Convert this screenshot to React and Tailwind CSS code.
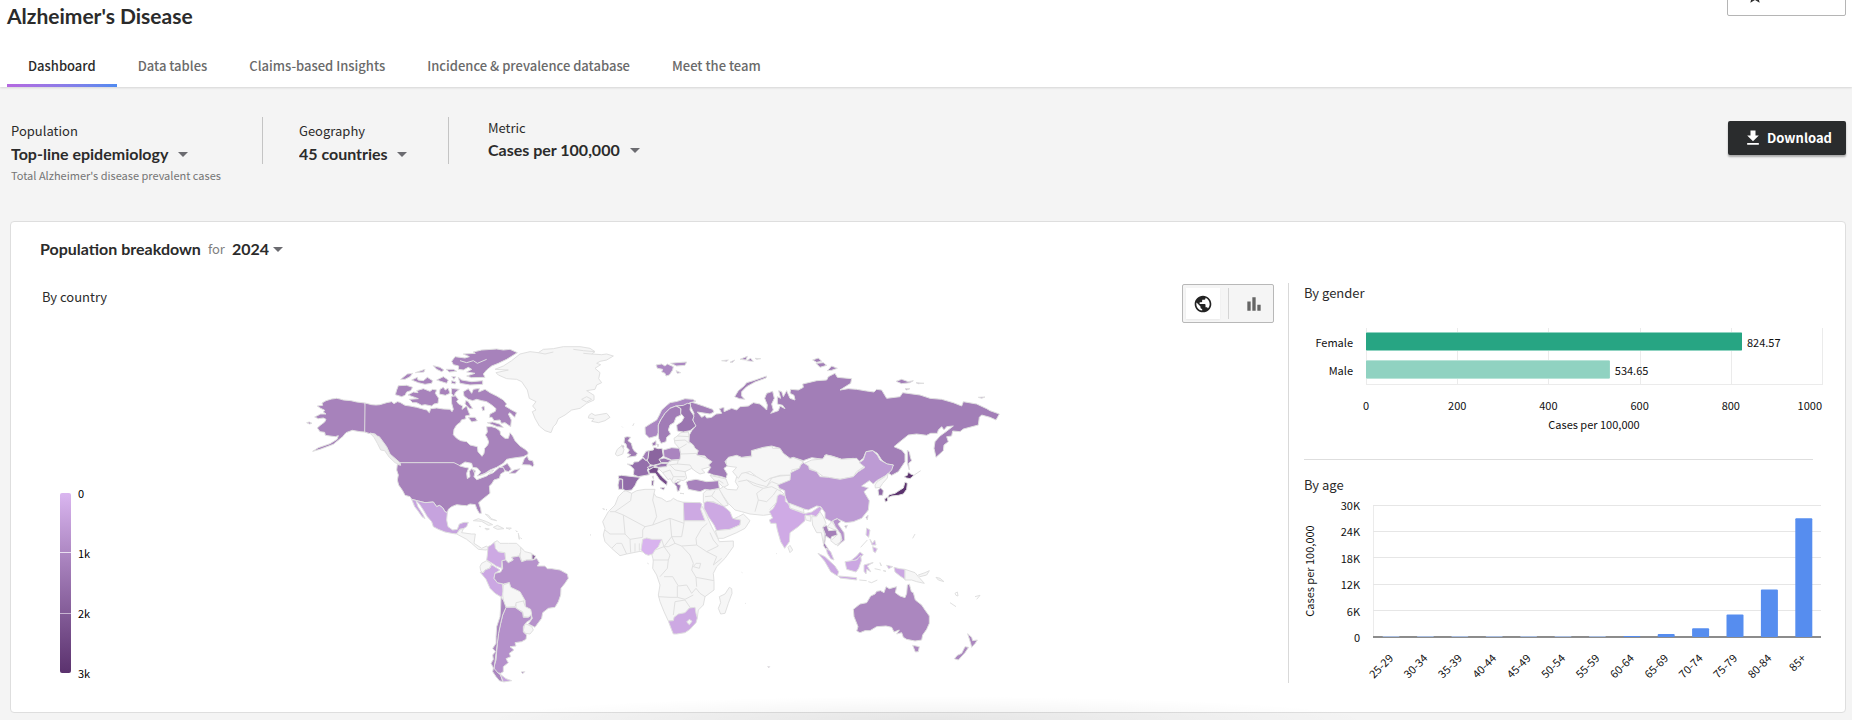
import React, { useState } from 'react';
import { MdArrowDropDown, MdBarChart, MdGetApp, MdPublic, MdStarBorder } from 'react-icons/md';

const tabs = [
  'Dashboard',
  'Data tables',
  'Claims-based Insights',
  'Incidence & prevalence database',
  'Meet the team',
];

const genderData = [
  { label: 'Female', value: 824.57, color: '#27a583', edge: '#8fd3c1' },
  { label: 'Male', value: 534.65, color: '#90d2c1', edge: '#b9e3d8' },
];

const ageData = [
  { label: '25-29', value: 30 },
  { label: '30-34', value: 30 },
  { label: '35-39', value: 30 },
  { label: '40-44', value: 30 },
  { label: '45-49', value: 30 },
  { label: '50-54', value: 40 },
  { label: '55-59', value: 60 },
  { label: '60-64', value: 250 },
  { label: '65-69', value: 700 },
  { label: '70-74', value: 2000 },
  { label: '75-79', value: 5100 },
  { label: '80-84', value: 10800 },
  { label: '85+', value: 27000 },
];

const NONE = '#f6f6f6';

// Each region has its own origin on the 2190 x 1059 map canvas
const regions = [
  {
    name: 'north-america',
    x: 0,
    y: 0,
    shapes: [
      // Alaska and the Aleutians
      ['#a782bb', 'M225,219L200,216 183,212 160,210 150,207 140,205 125,207 108,212 96,219 98,226 82,228 90,234 104,241 100,246 108,252 92,252 74,261 85,266 100,264 108,268 104,276 88,288 82,294 90,305 104,307 106,316 120,318 136,320 145,317 141,328 120,341 85,353 68,364 90,358 130,343 158,320 168,308 187,301 210,305 224,306 240,311Z'],
      ['#a782bb', 'M50,278L58,276 66,280 58,282Z'],
      // Canada
      ['#a782bb', 'M225,219L245,224 258,225 270,224 290,218 305,215 312,221 322,215 330,217 345,226 360,228 380,232 395,236 410,240 418,248 422,236 440,234 460,237 480,238 486,245 490,238 485,220 484,200 495,196 505,208 500,214 506,222 518,228 516,238 530,228 535,244 540,255 526,258 528,266 514,270 512,276 500,285 492,298 490,314 500,325 512,332 530,335 540,345 562,350 564,365 576,379 582,370 584,355 593,345 596,336 592,325 586,315 592,306 590,290 605,290 618,294 630,303 632,314 645,325 655,325 660,308 668,318 675,332 690,348 705,358 714,366 714,373 700,380 665,385 650,388 640,400 620,412 600,420 585,430 570,436 562,448 330,402 318,393 300,378 292,362 282,348 266,325 256,312 240,311 224,306Z'],
      ['#ededed', 'M240,309L252,312 262,318 268,320 290,350 300,372 330,398 332,405 315,398 298,382 284,362 272,360 262,340 252,322Z'],
      ['#a782bb', 'M325,167L350,166 368,172 362,182 350,186 345,196 335,200 316,194 320,180Z'],
      ['#a782bb', 'M354,195L370,186 384,188 380,182 400,176 420,184 428,178 440,180 436,190 446,205 444,220 432,222 425,228 405,224 395,226 380,218 368,218 358,208 385,206Z'],
      ['#a782bb', 'M332,148L352,132 368,130 360,140 345,148ZM365,150L382,142 384,150 400,152 412,142 428,152 425,160 405,163 385,158ZM376,128L405,118 402,126ZM430,107L450,112 462,120 455,125 440,118ZM440,150L460,140 475,150 470,160ZM468,118L490,118 500,124 478,126ZM485,140L497,140 492,148ZM485,152L498,156 496,162 484,160Z'],
      ['#a782bb', 'M682,68L660,58 640,60 620,57 575,60 550,66 556,70 520,72 538,80 525,84 495,80 485,94 490,104 506,108 505,118 520,120 535,112 545,118 530,126 555,130 530,138 545,143 585,142 580,132 590,120 605,108 625,100 650,88Z'],
      ['none', 'M510,92L530,98 550,92 562,100 590,88'],
      ['#a782bb', 'M505,142L515,150 545,155 578,152 578,163 540,165 510,160Z'],
      ['#a782bb', 'M450,178L460,172 466,180 474,174 480,190 466,196 448,192ZM485,175L508,178 496,188 492,200 484,190Z'],
      ['#a782bb', 'M520,185L535,176 545,190 550,178 568,175 566,186 585,178 600,188 620,198 640,210 650,222 645,228 665,240 680,248 674,262 660,248 655,252 664,270 662,290 645,278 634,280 630,270 612,272 606,262 598,262 600,252 616,244 618,236 605,225 590,215 575,212 560,208 548,212 535,208 522,198Z'],
      ['#a782bb', 'M535,262L555,262 562,272 545,276ZM527,212L534,214 548,236 540,236 525,222ZM575,232L582,228 584,240 578,242ZM592,278L608,276 628,282 640,292 622,290Z'],
      ['#a782bb', 'M703,386L712,378 716,390 728,392 732,405 728,410 720,405 696,404ZM658,430L672,420 690,416 676,430ZM645,422L635,410 652,400 664,418 655,425Z'],
      // United States
      ['#a782bb', 'M322,403L332,406 330,398 492,398 512,408 540,400 562,448 585,438 610,428 628,412 640,412 645,424 632,432 628,445 612,450 605,462 598,468 600,490 590,498 575,510 566,518 572,536 574,550 568,550 560,536 556,524 540,522 530,527 515,526 500,524 485,530 475,538 472,548 465,545 458,533 448,526 440,530 430,516 405,518 385,513 365,508 360,500 345,496 338,482 326,465 322,450 325,435 320,420Z'],
      ['#ffffff', 'M508,407L525,396 545,400 548,412 562,414 572,426 562,438 580,434 600,424 612,420 590,438 560,449 552,440 556,422 545,416 538,424 540,440 532,446 530,430 536,414 524,412Z'],
      // Mexico and Central America
      ['#c6a3de', 'M365,508L385,513 405,518 430,516 440,530 448,526 458,533 465,545 472,548 470,570 474,590 488,600 502,598 508,582 522,577 535,577 530,590 520,596 510,598 505,604 500,612 485,610 465,606 445,598 430,590 425,575 412,560 400,540 388,522 378,512 384,530 398,552 405,566 396,560 382,540 374,530Z'],
      [NONE, 'M500,612L510,598 520,596 515,608 545,612 556,612 552,640 575,655 590,648 597,656 588,660 565,658 545,640 530,628Z'],
      // Greenland and Iceland
      [NONE, 'M615,118L640,108 665,92 690,72 720,65 745,68 760,58 790,56 820,50 870,50 900,55 915,65 905,72 935,74 950,72 970,78 950,90 930,94 920,100 932,104 915,115 930,128 926,146 935,158 920,165 915,178 890,182 912,196 912,210 890,220 870,235 845,240 825,255 805,266 798,282 790,290 783,308 765,302 748,288 735,265 727,245 738,240 728,228 738,215 718,205 712,180 695,155 680,148 650,146 625,135 618,128 655,120Z'],
      [NONE, 'M875,208L890,200 905,208 890,216ZM897,256L905,250 915,256 950,250 960,262 945,272 925,278 905,274 912,266 895,264Z'],
      ['none', 'M745,68L765,72 790,66M850,58L880,62 915,65M880,70L905,72'],
    ],
  },
  {
    name: 'south-america',
    x: 510,
    y: 510,
    shapes: [
      [NONE, 'M40,62L55,56 80,65 98,74 85,76 65,64ZM100,82L112,76 132,86 112,88ZM138,84L154,84 150,88ZM58,79L62,80ZM75,85L88,87 80,90ZM76,42L86,46 94,56 110,62 92,58ZM168,92L172,96ZM175,100L178,118ZM182,114L185,116Z'],
      ['#cda9e3', 'M104,126L92,136 84,140 82,165 80,180 100,192 108,198 125,205 126,182 137,180 135,158 115,155 108,145Z'],
      [NONE, 'M104,126L112,122 120,130 145,130 170,130 182,142 190,150 180,160 178,168 155,172 160,180 145,188 137,180 135,158 115,155 106,145Z'],
      [NONE, 'M182,142L195,155 215,160 216,178 200,180 185,185 180,168 182,155Z'],
      ['#8b659f', 'M216,162L227,168 222,178 216,178Z'],
      [NONE, 'M65,190L80,182 95,192 88,205 75,210 68,218 62,212 60,200Z'],
      ['#cba7e2', 'M60,216L70,218 75,210 90,204 95,194 112,205 120,210 105,220 102,235 112,248 127,252 130,275 125,292 105,280 90,265 78,238Z'],
      ['#b692cb', 'M126,182L137,180 145,188 160,180 155,172 178,168 185,185 200,180 218,180 230,175 238,188 232,198 255,198 262,206 275,206 300,210 322,222 325,235 315,250 303,265 302,285 295,305 285,322 265,325 248,338 245,355 235,368 225,382 205,372 217,355 213,342 196,320 195,300 180,290 165,270 150,262 148,248 130,252 112,248 102,235 105,220 122,216 128,205Z'],
      [NONE, 'M130,255L148,248 152,262 180,275 193,298 190,308 170,308 165,320 140,322 132,312 128,285Z'],
      [NONE, 'M168,308L190,303 196,320 212,328 215,342 205,352 190,350 188,335 168,325Z'],
      [NONE, 'M195,370L215,380 220,390 210,402 196,400 190,392Z'],
      ['#b490ca', 'M138,322L165,322 188,338 190,352 205,352 215,345 213,358 198,368 190,380 190,396 200,405 198,418 185,425 165,428 168,438 150,440 162,450 148,460 152,470 138,476 145,488 130,500 130,515 122,520 105,518 102,500 108,480 110,455 112,430 115,400 122,370 128,345Z'],
      ['#aa86bf', 'M123,292L130,300 138,322 128,345 122,370 116,400 112,430 108,460 105,485 102,505 115,520 122,524 128,545 118,542 108,530 98,515 100,504 93,490 100,478 98,465 106,455 98,445 108,430 108,410 110,380 120,350 122,320Z'],
      ['#c6a3de', 'M120,522L138,536 155,542 130,546Z'],
      ['#a782bb', 'M183,516L194,515 188,521Z'],
      ['#a782bb', 'M428,26L434,28ZM438,30L441,28Z'],
      [NONE, 'M390,104L392,105ZM563,190L565,191Z'],
    ],
  },
  {
    name: 'africa',
    x: 900,
    y: 0,
    shapes: [
      [NONE, 'M100,485L108,482 125,490 140,482 165,478 195,478 192,490 198,500 215,505 230,515 242,512 250,505 262,512 280,517 330,518 345,545 365,590 382,622 388,635 430,633 430,650 405,685 380,710 370,730 372,755 372,780 345,800 340,825 325,840 322,862 235,873 222,845 210,815 205,795 210,765 200,735 188,715 190,690 185,672 150,664 110,672 90,677 65,655 45,635 40,615 45,595 38,575 55,545 75,525 85,500Z'],
      ['none', 'M125,490L122,512 75,545 100,555 105,612 60,612 45,600M75,545L60,545M100,555L165,590 158,600 158,622 120,628 105,612M165,590L188,585 240,565 282,580 282,517M192,490L188,510 195,535 200,560 188,585M240,565L245,620 222,650 215,628M282,572L345,572M245,620L275,620 282,580M245,620L255,640 235,650 222,650M255,640L275,648 320,645 350,665 385,648 370,630 360,608M320,645L318,625 335,595 352,580M350,665L380,680 370,705 395,685M275,648L300,675 310,700 305,720 318,742 372,752M188,690L235,690 240,675 222,650M235,690L232,715 210,740M222,740L248,740 265,768 290,765 305,790 318,775 330,790 345,800M205,800L240,802 262,802 285,808 310,795M262,768L262,802M255,815L250,855M255,815L285,810 300,832M65,655L80,640 95,640 110,672M120,628L122,668M135,640L135,665M148,640L148,662M318,700L332,700 328,715 310,710ZM222,650L195,660M318,742L320,770'],
      ['#cda9e3', 'M280,517L330,518 336,522 332,538 345,572 282,572Z'],
      ['#d8b3ee', 'M158,628L170,624 185,628 215,628 205,650 195,660 188,672 175,676 165,672 153,660Z'],
      ['#cda9e3', 'M235,873L250,872 252,862 265,852 285,848 298,834 315,832 318,850 322,864 318,878 300,898 285,908 260,912 250,912 245,900Z'],
      ['#f6f6f6', 'M290,876L298,868 306,874 298,884Z'],
      [NONE, 'M388,800L405,792 418,772 425,776 426,790 415,820 405,850 392,852 385,835 392,818Z'],
    ],
  },
  {
    name: 'eurasia',
    x: 900,
    y: 0,
    shapes: [
      // Eastern Europe, the Balkans and the Caucasus
      [NONE, 'M262,318L272,308 295,306 300,335 325,362 322,375 350,385 365,392 362,410 335,418 345,428 330,432 318,425 305,415 285,425 290,445 280,452 262,448 250,460 240,445 235,450 218,428 205,415 232,402 240,392 268,390 272,370 268,355 255,340 252,325Z'],
      ['none', 'M262,318L298,320M255,332L285,330 298,340M268,355L290,342M272,372L325,370M265,390L262,402 235,405M262,402L300,405 308,418M255,420L285,425M255,420L240,405M250,440L285,440M240,420L250,440 245,452M218,428L240,420'],
      [NONE, 'M360,436L408,447 415,465 400,472 388,460 372,450Z'],
      [NONE, 'M340,490L350,480 388,476 395,490 400,500 415,525 400,530 370,515 340,518Z'],
      ['none', 'M345,500L365,498 375,482M365,498L380,510 400,528M385,450L400,460'],
      [NONE, 'M440,440L460,425 500,440 540,445 570,438 608,435 600,452 565,465 572,482 582,492 565,500 562,515 540,538 548,552 520,556 480,552 455,545 435,540 415,520 400,498 388,478 400,470 412,478 440,480 445,470 436,455Z'],
      ['none', 'M445,455L470,450 490,465 520,475 500,490 505,510 495,545M520,475L545,470 575,485M505,510L530,515 550,495 560,480M470,450L500,462 530,470 545,455 570,465M530,470L545,445'],
      [NONE, 'M408,390L415,380 440,375 455,382 485,380 484,362 520,352 545,346 548,355 570,355 580,370 600,385 610,382 640,395 632,405 628,415 605,420 608,435 570,436 540,445 525,455 500,440 480,425 455,430 445,445 428,425 440,412 410,408Z'],
      // Arabia
      ['#cda9e3', 'M342,518L352,514 370,517 400,528 420,545 428,565 452,570 450,585 420,598 380,602 372,585 355,560 342,535Z'],
      [NONE, 'M376,602L420,598 450,585 452,570 432,566 445,560 460,552 480,572 465,595 440,608 400,625 384,625Z'],
      // Russia
      ['#a27eb7', 'M300,215L316,220 340,228 368,238 372,246 360,252 322,246 335,262 345,256 350,264 365,262 378,252 395,250 388,236 402,232 402,245 425,235 440,240 450,230 475,228 490,218 510,222 520,230 530,240 532,225 524,205 530,190 548,184 553,205 545,222 550,240 542,250 565,242 570,228 585,236 578,226 562,222 562,200 572,205 566,182 575,185 580,200 590,182 600,205 615,210 612,196 600,190 602,178 625,180 640,172 638,162 655,158 680,152 710,150 715,140 735,130 742,142 785,146 782,160 750,180 775,176 800,178 830,183 852,186 860,178 875,180 890,205 930,200 938,188 990,195 1020,205 1055,208 1090,218 1115,228 1120,215 1160,222 1190,236 1200,242 1228,252 1218,270 1200,262 1175,255 1168,262 1165,285 1120,297 1110,305 1088,303 1085,318 1070,320 1075,335 1062,345 1060,362 1038,382 1032,355 1035,335 1050,318 1068,305 1090,288 1070,290 1062,300 1055,290 1045,300 1042,310 1022,310 1010,316 980,312 955,315 930,335 912,350 935,360 945,372 945,395 925,425 905,436 896,430 910,405 890,402 875,390 862,370 848,362 828,365 820,385 808,394 790,385 755,388 725,378 705,375 700,388 665,383 640,392 610,382 600,385 580,370 570,355 545,348 520,352 484,362 485,378 455,382 440,376 415,382 405,395 412,408 402,415 412,432 408,445 395,440 370,435 352,428 362,412 356,405 366,395 350,385 345,378 320,375 325,362 315,355 310,345 297,335 298,315 305,302 316,290 308,270 312,250 302,230Z'],
      ['#a27eb7', 'M434,200L445,182 462,168 470,158 490,152 530,138 528,144 495,156 470,170 455,185 455,198 464,208 448,206Z'],
      ['#a27eb7', 'M668,90L685,84 695,94 680,97ZM678,100L700,98 710,106 690,112ZM712,122L725,108 742,115 725,121ZM918,154L935,148 955,155 970,152 960,158 935,161ZM978,158L1002,160 985,161ZM945,176L960,176 950,180ZM1165,202L1185,201 1175,205ZM395,92L415,90 410,94ZM420,97L434,90 428,97ZM450,88L472,79 468,90ZM470,92L482,85 490,94ZM495,85L512,86 500,88ZM952,360L958,366 962,385 965,392 956,400 958,420 952,400Z'],
      // Nordics
      ['#ab87c2', 'M198,105L215,102 225,108 232,102 250,110 248,120 238,135 228,138 225,130 215,126 218,118 202,115ZM242,100L260,98 290,96 285,106 260,108ZM258,122L272,128 262,130Z'],
      ['#ab87c2', 'M165,292L180,282 200,270 208,255 215,240 228,228 240,218 262,214 285,206 308,208 318,214 300,218 290,225 270,228 258,228 240,235 225,250 212,270 205,285 205,308 200,318 178,324 166,312Z'],
      ['#a17cb6', 'M205,285L212,270 225,250 240,235 258,228 272,235 273,255 258,262 252,278 240,285 235,300 242,312 230,322 228,335 213,340 206,325 205,310Z'],
      ['#9a75b0', 'M260,228L280,226 292,220 302,222 300,240 312,258 308,270 318,288 300,302 280,306 262,303 260,285 275,275 282,262 272,250 273,236Z'],
      // Western and Central Europe
      ['#9d79b2', 'M104,322L112,320 122,322 114,332 124,340 128,355 132,362 142,370 138,378 112,382 122,374 112,370 118,360 110,352 108,342 102,338ZM94,345L102,348 100,355Z'],
      [NONE, 'M82,358L94,348 102,358 98,372 82,378 76,372Z'],
      ['#946fab', 'M112,402L128,404 132,396 145,395 158,384 170,392 184,398 178,410 172,420 178,434 162,437 145,440 130,434 132,418 122,408Z'],
      ['#916ca8', 'M85,438L95,436 130,440 150,442 140,455 136,465 125,480 108,482 98,478 98,448 86,446Z'],
      ['#9a75b0', 'M88,447L97,448 98,478 86,478 84,465Z'],
      ['#8b659f', 'M176,362L190,360 192,352 205,356 216,355 220,378 208,388 214,400 190,406 180,404 172,392Z'],
      ['#a17cb6', 'M158,380L168,364 177,362 174,385 168,392ZM186,340L198,332 198,345 188,348ZM200,342L206,344 204,350Z'],
      ['#aa85bf', 'M220,360L245,353 268,355 272,372 270,388 245,390 222,380Z'],
      ['#9a75b0', 'M207,388L222,384 245,392 232,398 214,398ZM192,408L215,400 232,400 230,410 205,412ZM172,412L190,406 195,413 178,418Z'],
      ['#754c8a', 'M176,420L190,412 206,414 203,425 216,440 232,455 230,466 222,460 208,448 196,430 178,430Z'],
      ['#8b659f', 'M210,474L224,472 221,480ZM185,452L192,450 190,468 185,466ZM187,440L190,438 190,446Z'],
      ['#9a75b0', 'M252,460L272,452 262,462 272,466 268,482 262,484 260,470ZM270,490L282,491Z'],
      ['#a782bc', 'M288,456L296,452 318,448 350,455 385,452 388,475 360,480 345,478 330,485 295,478Z'],
      // Asia
      [NONE, 'M643,400L665,390 698,387 708,374 730,380 755,388 800,385 808,394 820,398 822,410 800,425 790,440 750,448 700,440 680,425 658,415Z'],
      ['#bd9bd4', 'M563,465L600,450 602,428 628,415 632,405 640,398 656,408 658,418 680,425 690,440 715,442 750,448 790,440 805,425 825,412 808,398 820,390 828,365 848,362 862,375 870,390 892,402 910,405 905,420 890,435 860,452 850,462 838,452 815,468 835,474 822,485 838,512 835,540 815,565 790,575 768,578 755,572 740,566 725,575 705,565 705,548 692,530 680,528 655,540 620,532 595,520 585,500 584,482 568,475Z'],
      [NONE, 'M855,465L862,455 885,440 894,430 892,444 878,460 870,472 856,474Z'],
      ['#8f6aa6', 'M864,480L872,474 880,482 878,496 866,496Z'],
      ['#5b326e', 'M942,440L952,436 955,426 962,432 972,436 960,446 950,444ZM945,456L952,460 950,478 940,492 925,496 905,498 892,504 898,494 915,490 930,480 940,474ZM884,506L893,502 893,512 886,516Z'],
      ['none', 'M970,437L992,422'],
      ['#cfaae5', 'M562,498L570,492 586,498 586,514 596,522 600,535 640,550 648,550 665,546 688,530 696,534 688,548 678,560 665,555 645,558 645,572 625,590 600,608 598,635 584,655 572,635 562,600 558,580 542,580 538,570 548,564 538,545 550,535 560,515Z'],
      [NONE, 'M598,520L640,536 642,548 600,534ZM645,555L662,558 662,574 648,570ZM665,560L680,560 690,545 700,560 708,580 698,592 704,612 700,640 694,608 680,608 668,585ZM594,652L600,646 608,660 600,668Z'],
      [NONE, 'M712,590L725,575 738,592 755,612 752,636 738,645 722,632 738,618 740,602Z'],
      ['#a480b8', 'M698,592L710,586 716,602 738,600 742,615 725,620 722,628 708,618 704,640 718,662 706,656 700,646 706,612Z'],
      ['#b692cb', 'M728,572L742,566 752,575 744,582 762,608 764,630 742,648 756,630 752,612 736,590Z'],
      ['#c6a3de', 'M708,654L722,665 732,690 722,686 712,670ZM785,690L800,678 810,666 820,674 808,684 790,694Z'],
      ['#cba7e2', 'M684,670L705,680 735,708 746,725 742,738 722,725 704,694ZM745,738L770,740 800,743 800,750 750,744ZM765,695L785,692 800,690 812,676 814,692 806,715 798,726 770,718ZM822,705L848,698 832,708 842,725 830,718 828,732 822,724ZM870,698L874,708ZM890,706L908,710 896,716ZM912,712L928,716 945,718 945,748 930,738 915,726ZM880,722L888,724Z'],
      ['none', 'M808,750L830,752M835,755L845,758 862,750M854,716L872,720M845,700L850,698'],
      [NONE, 'M945,718L975,728 985,740 1003,760 980,755 965,750 945,750ZM985,735L1005,728 1018,722 1010,735 990,740ZM1038,742L1050,745 1062,755 1045,750Z'],
      ['#cba7e2', 'M830,594L840,600 836,622 828,615ZM848,650L862,656 856,668 850,664ZM840,628L848,640 854,630 858,645 846,645Z'],
      ['none', 'M832,630L812,652'],
      ['#a782bb', 'M828,562L834,556 832,570ZM764,588L772,586 768,595Z'],
      ['none', 'M96,290L98,292M128,288L132,280M558,670L560,671M455,727L457,728M466,820L468,821M968,625L975,612M1095,790L1102,786 1104,798 1098,796ZM1155,800L1170,796 1160,808M1080,818L1098,830'],
    ],
  },
  {
    name: 'oceania',
    x: 1380,
    y: 300,
    shapes: [
      ['#ab87bf', 'M310,538L330,522 350,518 362,498 375,492 380,484 392,482 402,488 408,470 418,476 440,470 436,488 450,498 465,503 470,490 472,465 478,462 484,485 490,488 496,510 515,525 525,540 538,558 538,580 530,598 518,615 515,630 495,633 470,628 460,622 455,608 440,612 448,600 432,606 425,592 408,588 380,590 360,602 345,602 330,608 320,603 324,590 312,560Z'],
      ['#ab87bf', 'M488,646L508,650 505,665 496,666Z'],
      ['#ab87bf', 'M653,611L665,622 668,632 682,630 676,640 665,652 662,640ZM613,686L622,676 635,670 645,650 656,652 645,668 636,678 625,690Z'],
      ['#a782bb', 'M53,710L59,710 56,713Z'],
    ],
  },
];

function Dropdown({ id, label, value, tight }) {
  return (
    <span className="relative inline-flex w-fit items-center">
      <select
        id={id}
        aria-label={label}
        className={`h-6 appearance-none bg-transparent font-[Lato] text-base leading-6 font-bold ${
          tight ? 'pr-5' : 'pr-[26px]'
        }`}
      >
        <option>{value}</option>
      </select>
      <MdArrowDropDown className="pointer-events-none absolute right-0 size-6 text-[#6b6b70]" />
    </span>
  );
}

function WorldMap() {
  return (
    <svg viewBox="0 0 2190 1059" className="h-[353px] min-w-0 flex-1" role="img" aria-label="World map">
      {regions.map((region) => (
        <g
          key={region.name}
          transform={`translate(${region.x} ${region.y})`}
          stroke="#e0e0e0"
          strokeWidth="3"
          strokeLinejoin="round"
        >
          {region.shapes.map(([fill, d]) => (
            <path key={d} fill={fill} d={d} />
          ))}
        </g>
      ))}
    </svg>
  );
}

function Legend() {
  return (
    <div className="mb-0.5 ml-[18px] flex items-center gap-[7px] self-end">
      <div className="flex h-[180px] w-[11px] flex-col justify-evenly rounded-xs bg-linear-to-b from-[#dab6f0] to-[#5b326e]">
        <span className="h-px bg-[#e9dff0]" />
        <span className="h-px bg-[#c8b5d2]" />
      </div>
      <div className="flex h-[196px] w-6 flex-col justify-between text-[11px] leading-4 text-black">
        <span>0</span>
        <span>1k</span>
        <span>2k</span>
        <span>3k</span>
      </div>
    </div>
  );
}

function GenderChart() {
  const x = (v) => 62 + (v / 1000) * 456;
  return (
    <svg viewBox="0 0 526 155" className="h-[155px] w-[526px] text-[11px]" fill="#111111">
      {[0, 200, 400, 600, 800, 1000].map((v) => (
        <g key={v}>
          <rect x={Math.round(x(v))} y="24" width="1" height="56" fill="#ebebeb" />
          <text x={v === 1000 ? 518 : x(v)} y="106" textAnchor={v === 1000 ? 'end' : 'middle'}>
            {v}
          </text>
        </g>
      ))}
      <rect x="62" y="80" width="457" height="1" fill="#ebebeb" />
      {genderData.map((d, i) => (
        <g key={d.label}>
          <rect x="62" y={28 + i * 28} width={x(d.value) - 62} height="19" rx="1" fill={d.edge} />
          <rect x="62" y={29 + i * 28} width={x(d.value) - 62} height="17" fill={d.color} />
          <text x="49" y={43 + i * 28} textAnchor="end">
            {d.label}
          </text>
          <text x={x(d.value) + 5} y={43 + i * 28}>
            {d.value}
          </text>
        </g>
      ))}
      <text x="290" y="125" textAnchor="middle">
        Cases per 100,000
      </text>
    </svg>
  );
}

function AgeChart() {
  const ticks = ['30K', '24K', '18K', '12K', '6K', '0'];
  const y = (v) => 142 - (v / 30000) * 132;
  return (
    <svg viewBox="0 0 526 188" className="h-[188px] w-[526px] text-[11px]" fill="#111111">
      <rect x="69" y="10" width="1" height="132" fill="#ebebeb" />
      {ticks.map((tick, i) => (
        <g key={tick}>
          <rect
            x="69"
            y={Math.round(10 + i * 26.2)}
            width="448"
            height={tick === '0' ? 2 : 1}
            fill={tick === '0' ? '#8c8c8c' : '#e6e6e6'}
          />
          <text x="56" y={Math.round(15 + i * 26.4)} textAnchor="end">
            {tick}
          </text>
        </g>
      ))}
      {ageData.map((d, i) => {
        const cx = 87 + i * 34.4;
        const top = Math.min(y(d.value), 141);
        return (
          <g key={d.label}>
            <rect
              x={cx - 8.5}
              y={top}
              width="17"
              height={142 - top}
              rx="1"
              fill={d.value < 100 ? '#a9bddf' : '#568def'}
            />
            <text textAnchor="end" transform={`translate(${cx + 3} 164) rotate(-45)`}>
              {d.label}
            </text>
          </g>
        );
      })}
      <text textAnchor="middle" transform="translate(10 76) rotate(-90)">
        Cases per 100,000
      </text>
    </svg>
  );
}

export default function App() {
  const [activeTab, setActiveTab] = useState('Dashboard');
  const [view, setView] = useState('map');

  return (
    <div className="relative min-h-screen overflow-hidden bg-[#f4f4f4] font-['Noto_Sans_CJK_SC',sans-serif] text-[13px] text-[#2b2b2b]">
      <header className="bg-white shadow-[0_1px_2px_rgba(0,0,0,0.12)]">
        <div className="flex h-8 items-start justify-between pr-1.5 pl-[7px]">
          <h1 className="font-[Lato] text-[21px] leading-8 font-bold">Alzheimer's Disease</h1>
          <button
            type="button"
            aria-label="Follow"
            className="-mt-6 flex h-10 w-[119px] items-center rounded-xs border border-[#b5b5b5] bg-white pl-[18px]"
          >
            <MdStarBorder className="size-4.5" />
          </button>
        </div>
        <nav className="mt-[13px] flex pl-[7px]">
          {tabs.map((tab) => (
            <button
              key={tab}
              type="button"
              onClick={() => setActiveTab(tab)}
              className={`relative h-[42px] px-[21px] font-medium ${
                tab === activeTab ? 'text-[#2b2b2b]' : 'text-[#6a6a6a]'
              }`}
            >
              {tab}
              {tab === activeTab && (
                <span className="absolute inset-x-0 bottom-0 h-[3px] bg-linear-to-r from-[#b568e0] to-[#4f8af0]" />
              )}
            </button>
          ))}
        </nav>
      </header>

      <section className="flex items-start pt-[30px] pr-1.5 pb-[37px] pl-[11px]">
        <div className="flex flex-col pt-1 pr-[41px]">
          <label htmlFor="population" className="mb-px leading-5">Population</label>
          <Dropdown id="population" value="Top-line epidemiology" />
          <p className="text-[11px] leading-[18px] text-[#757575]">Total Alzheimer's disease prevalent cases</p>
        </div>
        <div className="flex h-[47px] flex-col border-l border-[#c4c4c4] pt-1 pr-[34px] pl-9">
          <label htmlFor="geography" className="mb-px leading-5">Geography</label>
          <Dropdown id="geography" value="45 countries" />
        </div>
        <div className="flex h-[47px] flex-col border-l border-[#c4c4c4] pt-px pl-[39px]">
          <label htmlFor="metric" className="leading-5">Metric</label>
          <Dropdown id="metric" value="Cases per 100,000" />
        </div>
        <button
          type="button"
          className="mt-1 ml-auto flex h-[34px] w-[118px] items-center justify-end gap-1 rounded-xs bg-[#2a2c2d] pr-3.5 font-bold text-white shadow-[0_2px_2px_rgba(0,0,0,0.3)]"
        >
          <MdGetApp className="size-5" />
          Download
        </button>
      </section>

      <main className="mr-1.5 ml-[10px] rounded-sm border border-[#dedede] bg-white pt-[15px] pb-[29px]">
        <div className="flex h-6 items-center pl-[29px]">
          <h2 className="font-[Lato] text-base leading-6 font-bold">Population breakdown</h2>
          <span className="mx-[7px] text-[#808080]">for</span>
          <Dropdown label="Year" value="2024" tight />
        </div>

        <div className="mt-[22px] flex">
          <section className="flex-1 pr-3.5 pl-[31px]">
            <div className="flex h-[47px] items-start justify-between">
              <h3 className="pt-1 leading-5">By country</h3>
              <div className="mt-px flex h-[39px] w-[92px] rounded-xs border border-[#b8b8b8] bg-[#f5f5f5] p-[3px]">
                <button
                  type="button"
                  aria-label="Map view"
                  onClick={() => setView('map')}
                  className={`flex w-[34px] items-center justify-center ${view === 'map' ? 'bg-white shadow-xs' : ''}`}
                >
                  <MdPublic className="size-5 text-[#222222]" />
                </button>
                <span className="mx-2 w-px bg-[#d4d4d4]" />
                <button
                  type="button"
                  aria-label="Chart view"
                  onClick={() => setView('chart')}
                  className={`flex flex-1 items-center justify-center ${view === 'chart' ? 'bg-white shadow-xs' : ''}`}
                >
                  <MdBarChart className="size-5 text-[#666666]" />
                </button>
              </div>
            </div>
            <div className="flex pr-[66px]">
              <Legend />
              <WorldMap />
            </div>
          </section>

          <section className="w-[557px] border-l border-[#d9d9d9] pl-[15px]">
            <h3 className="h-[21px] leading-5">By gender</h3>
            <GenderChart />
            <hr className="w-[509px] border-[#dedede]" />
            <h3 className="mt-[15px] h-5 leading-5">By age</h3>
            <AgeChart />
          </section>
        </div>
      </main>

      <div className="pointer-events-none absolute inset-x-0 bottom-0 mx-auto h-6 w-[900px] bg-[radial-gradient(ellipse_at_bottom,rgba(0,0,0,0.06),transparent_70%)]" />
    </div>
  );
}
